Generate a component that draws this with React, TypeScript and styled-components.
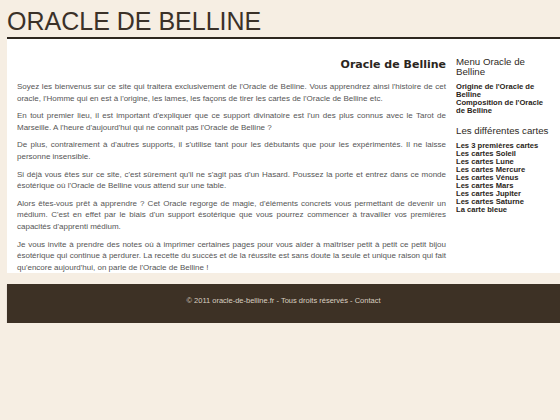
import styled, { createGlobalStyle } from 'styled-components'

const GlobalStyle = createGlobalStyle`
  body {
    margin: 0;
    background: #f6eee3;
    font-family: "Liberation Sans", Arial, sans-serif;
  }
`

const menuLinks = ["Origine de l'Oracle de Belline", "Composition de l'Oracle de Belline"]

const cardLinks = [
  'Les 3 premières cartes',
  'Les cartes Soleil',
  'Les cartes Lune',
  'Les cartes Mercure',
  'Les cartes Vénus',
  'Les cartes Mars',
  'Les cartes Jupiter',
  'Les cartes Saturne',
  'La carte bleue',
]

const paragraphs = [
  "Soyez les bienvenus sur ce site qui traitera exclusivement de l'Oracle de Belline. Vous apprendrez ainsi l'histoire de cet oracle, l'Homme qui en est à l'origine, les lames, les façons de tirer les cartes de l'Oracle de Belline etc.",
  "En tout premier lieu, il est important d'expliquer que ce support divinatoire est l'un des plus connus avec le Tarot de Marseille. A l'heure d'aujourd'hui qui ne connaît pas l'Oracle de Belline ?",
  "De plus, contrairement à d'autres supports, il s'utilise tant pour les débutants que pour les expérimentés. Il ne laisse personne insensible.",
  "Si déjà vous êtes sur ce site, c'est sûrement qu'il ne s'agit pas d'un Hasard. Poussez la porte et entrez dans ce monde ésotérique où l'Oracle de Belline vous attend sur une table.",
  "Alors êtes-vous prêt à apprendre ? Cet Oracle regorge de magie, d'éléments concrets vous permettant de devenir un médium. C'est en effet par le biais d'un support ésotérique que vous pourrez commencer à travailler vos premières capacités d'apprenti médium.",
  "Je vous invite à prendre des notes où à imprimer certaines pages pour vous aider à maîtriser petit à petit ce petit bijou ésotérique qui continue à perdurer. La recette du succès et de la réussite est sans doute la seule et unique raison qui fait qu'encore aujourd'hui, on parle de l'Oracle de Belline !",
]

const App = () => {
  return (
    <>
      <GlobalStyle />
      <Page>
        <Header>
          <h1>ORACLE DE BELLINE</h1>
        </Header>
        <Content>
          <Main>
            <h2>Oracle de Belline</h2>
            {paragraphs.map((p, i) => (
              <p key={i}>{p}</p>
            ))}
          </Main>
          <Sidebar>
            <SideTitle>Menu Oracle de Belline</SideTitle>
            <LinkList>
              {menuLinks.map((l) => (
                <li key={l}><a href="#">{l}</a></li>
              ))}
            </LinkList>
            <SideTitle $gap={11} $nowrap>Les différentes cartes</SideTitle>
            <LinkList>
              {cardLinks.map((l) => (
                <li key={l}><a href="#">{l}</a></li>
              ))}
            </LinkList>
          </Sidebar>
        </Content>
        <Footer>
          © 2011 oracle-de-belline.fr - Tous droits réservés - <a href="#">Contact</a>
        </Footer>
      </Page>
    </>
  )
}

const Page = styled.div`
  padding-left: 7px;
`

const Header = styled.div`
  padding: 9px 0 3px;
  border-bottom: 2px solid #2e271f;

  h1 {
    margin: 0;
    font-family: "Liberation Sans", Arial, sans-serif;
    font-weight: 400;
    font-size: 25px;
    line-height: 25px;
    color: #3b3128;
  }
`

const Content = styled.div`
  display: flex;
  background: #fff;
`

const Main = styled.div`
  width: 429px;
  padding: 19px 10px 0;

  h2 {
    margin: 0 0 10px;
    text-align: right;
    font-family: "DejaVu Sans", Verdana, sans-serif;
    font-weight: 700;
    font-size: 11px;
    line-height: 13px;
    color: #2b2520;
  }

  p {
    margin: 0 0 6px;
    font-size: 8px;
    line-height: 11.6px;
    text-align: justify;
    color: #555;
  }

  p:last-child {
    margin-bottom: 0;
  }
`

const Sidebar = styled.div`
  width: 97px;
  padding-top: 18px;
`

const SideTitle = styled.h3<{ $gap?: number; $nowrap?: boolean }>`
  margin: ${({ $gap }) => $gap ?? 0}px 0 6px;
  font-weight: 400;
  font-size: 9.7px;
  line-height: 10px;
  color: #2f2a25;
  white-space: ${({ $nowrap }) => ($nowrap ? 'nowrap' : 'normal')};
`

const LinkList = styled.ul`
  margin: 0;
  padding: 0;
  list-style: none;

  li {
    font-size: 7.6px;
    line-height: 8px;
    font-weight: 700;
  }

  a {
    color: #2a2520;
    text-decoration: none;
  }
`

const Footer = styled.div`
  margin-top: 11px;
  height: 27px;
  padding-top: 12px;
  background: #3d3125;
  box-shadow: 0 1px 1px rgba(0, 0, 0, 0.25);
  text-align: center;
  font-size: 7.5px;
  line-height: 10px;
  color: #d9cfc0;

  a {
    color: #d9cfc0;
    text-decoration: none;
  }
`

export default App
